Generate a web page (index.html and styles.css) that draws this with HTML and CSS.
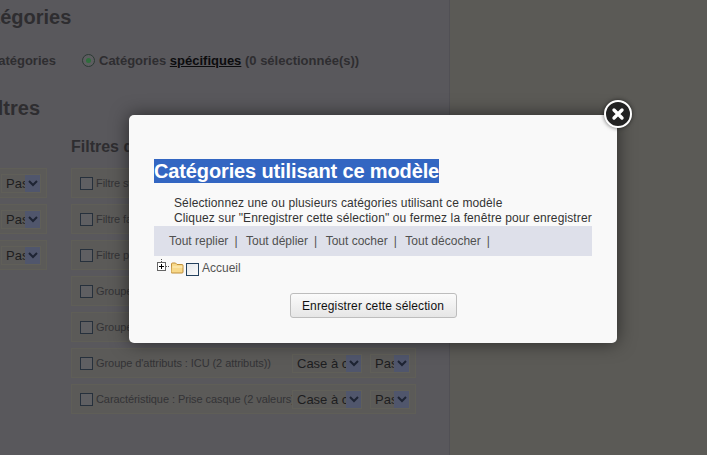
FILE: index.html
```html
<!DOCTYPE html>
<html lang="fr">
<head>
<meta charset="utf-8">
<title>Catégories</title>
<link rel="stylesheet" href="styles.css">
</head>
<body>
<div class="page">
  <main class="main">
    <h2 class="h-cat">Catégories</h2>
    <div class="radios">
      <span class="radio-all">Toutes les catégories</span>
      <svg class="radio-dot" viewBox="0 0 13 13" width="13" height="13"><circle cx="6.500" cy="6.500" r="6" fill="#5d5d60" stroke="#2c3a34"/><circle cx="6.500" cy="6.500" r="2.500" fill="#2f6e3c"/></svg>
      <span>Catégories <u class="link">spécifiques</u> (0 sélectionnée(s))</span>
    </div>
    <h2 class="h-fil">Filtres</h2>
    <div class="columns">
      <div class="col-left">
        <div class="lbox"><div class="sel sel-s"><span class="sel-t">Pas</span><span class="sel-a"><svg viewBox="0 0 10 8" width="10" height="8"><path d="M1 2l4 4 4-4" fill="none" stroke="#1e2433" stroke-width="2"/></svg></span></div></div>
        <div class="lbox"><div class="sel sel-s"><span class="sel-t">Pas</span><span class="sel-a"><svg viewBox="0 0 10 8" width="10" height="8"><path d="M1 2l4 4 4-4" fill="none" stroke="#1e2433" stroke-width="2"/></svg></span></div></div>
        <div class="lbox"><div class="sel sel-s"><span class="sel-t">Pas</span><span class="sel-a"><svg viewBox="0 0 10 8" width="10" height="8"><path d="M1 2l4 4 4-4" fill="none" stroke="#1e2433" stroke-width="2"/></svg></span></div></div>
      </div>
      <div class="col-right">
        <h3 class="h-sub">Filtres disponibles</h3>
        <div class="row"><span class="cb"></span><span class="lbl">Filtre stock</span></div>
        <div class="row"><span class="cb"></span><span class="lbl">Filtre fabricant</span></div>
        <div class="row"><span class="cb"></span><span class="lbl">Filtre prix</span></div>
        <div class="row"><span class="cb"></span><span class="lbl">Groupe d'attributs</span></div>
        <div class="row"><span class="cb"></span><span class="lbl">Groupe d'attributs</span></div>
        <div class="row"><span class="cb"></span><span class="lbl">Groupe d'attributs : ICU (2 attributs))</span><div class="sel sel-l"><span class="sel-t">Case à cocher</span><span class="sel-a"><svg viewBox="0 0 10 8" width="10" height="8"><path d="M1 2l4 4 4-4" fill="none" stroke="#1e2433" stroke-width="2"/></svg></span></div><div class="sel sel-s"><span class="sel-t">Pas</span><span class="sel-a"><svg viewBox="0 0 10 8" width="10" height="8"><path d="M1 2l4 4 4-4" fill="none" stroke="#1e2433" stroke-width="2"/></svg></span></div></div>
        <div class="row"><span class="cb"></span><span class="lbl">Caractéristique : Prise casque (2 valeurs)</span><div class="sel sel-l"><span class="sel-t">Case à cocher</span><span class="sel-a"><svg viewBox="0 0 10 8" width="10" height="8"><path d="M1 2l4 4 4-4" fill="none" stroke="#1e2433" stroke-width="2"/></svg></span></div><div class="sel sel-s"><span class="sel-t">Pas</span><span class="sel-a"><svg viewBox="0 0 10 8" width="10" height="8"><path d="M1 2l4 4 4-4" fill="none" stroke="#1e2433" stroke-width="2"/></svg></span></div></div>
      </div>
    </div>
  </main>
  <aside class="side"></aside>
</div>

<section class="modal">
  <button class="close" aria-label="Fermer"><svg viewBox="0 0 14 14" width="14" height="14"><path d="M3 3l8 8M11 3l-8 8" stroke="#fff" stroke-width="3.4" stroke-linecap="round"/></svg></button>
  <h1 class="m-title"><span>Catégories utilisant ce modèle</span></h1>
  <p class="m-desc">Sélectionnez une ou plusieurs catégories utilisant ce modèle<br>Cliquez sur "Enregistrer cette sélection" ou fermez la fenêtre pour enregistrer</p>
  <div class="tools">
    <a>Tout replier</a><i>|</i>
    <a>Tout déplier</a><i>|</i>
    <a>Tout cocher</a><i>|</i>
    <a>Tout décocher</a><i>|</i>
  </div>
  <div class="tree">
    <svg class="plus" viewBox="0 0 16 16" width="16" height="16"><path d="M5.500 0v3M10 7.500h3" stroke="#555" stroke-dasharray="1 1" fill="none"/><rect x="1.500" y="3.500" width="8" height="8" fill="#fff" stroke="#666"/><path d="M3 7.500h5M5.500 5v5" stroke="#000"/></svg>
    <svg class="folder" viewBox="0 0 13 12" width="13" height="12"><path d="M.5 3V2q0-1 1-1h3l1.500 1.500h5q1 0 1 1V10q0 1-1 1h-10q-1 0-1-1z" fill="#f8d98a" stroke="#c08f3a"/><path d="M1.500 5h10" stroke="#fdf0c4"/></svg>
    <span class="cb cb-m"></span>
    <span class="t-lbl">Accueil</span>
  </div>
  <div class="actions"><button class="save">Enregistrer cette sélection</button></div>
</section>
</body>
</html>
```
FILE: styles.css
```css
* { box-sizing: border-box; }
html, body { margin: 0; height: 100%; }
body { overflow: hidden; font-family: "Liberation Sans", Arial, sans-serif; background: #5b5a56; }

.page { display: flex; width: 707px; height: 455px; }
.main { width: 450px; flex: none; background: #59585c; border-right: 1px solid #515055; overflow: hidden; padding-top: 5px; }
.side { flex: 1; background: #5b5a56; }

.h-cat, .h-fil { margin: 0; font-size: 20px; line-height: 24px; font-weight: bold; color: #2e2d30; }
.h-cat { margin-left: -32px; }
.h-fil { margin: 28px 0 0 -20px; }

.radios { display: flex; align-items: center; margin: 23px 0 0 -76px; height: 16px; font-size: 13px; font-weight: bold; color: #2e2d30; white-space: nowrap; }
.radio-all { width: 152px; flex: none; }
.radio-dot { flex: none; margin: 0 4px 0 6px; }
.link { color: #0c0c0e; }

.columns { display: flex; gap: 24px; margin-left: -20px; }
.col-left { width: 67px; flex: none; padding-top: 48px; display: flex; flex-direction: column; gap: 6px; }
.col-right { width: 345px; flex: none; }
.lbox { height: 30px; border: 1px solid #5f5e57; border-left: 0; display: flex; align-items: center; justify-content: flex-end; padding-right: 5px; background: #5b5a58; }
.h-sub { margin: 18px 0 12px; font-size: 16px; line-height: 18px; color: #2e2d30; white-space: nowrap; }

.row { display: flex; align-items: center; height: 30px; margin-bottom: 6px; padding-left: 8px; border: 1px solid #5f5e57; background: #5b5a58; overflow: hidden; }
.cb { flex: none; display: block; width: 13px; height: 13px; border: 1px solid #26303c; background: #5f5f62; }
.lbl { flex: none; width: 196px; margin-left: 3px; font-size: 11px; letter-spacing: -.07px; color: #333336; white-space: nowrap; overflow: hidden; }
.row .sel-l { margin-right: 8px; }

.sel { flex: none; display: flex; height: 19px; border: 1px solid #605f58; background: #5b5a58; align-items: stretch; }
.sel-s { width: 40px; }
.sel-l { width: 70px; }
.sel-t { flex: 1; min-width: 0; padding-left: 4px; font-size: 13px; line-height: 17px; color: #1d1d1f; white-space: nowrap; overflow: hidden; }
.sel-a { flex: none; width: 15px; background: #50566c; display: flex; align-items: center; justify-content: center; }

.modal { position: absolute; left: 129px; top: 115px; width: 488px; height: 228px; padding: 44px 25px 0; background: #f9f9f9; border-radius: 5px; box-shadow: 0 0 18px rgba(0,0,0,.55); }
.close { position: absolute; right: -15px; top: -15px; width: 28px; height: 28px; padding: 0; border: 2px solid #fff; border-radius: 50%; background: #222; display: flex; align-items: center; justify-content: center; box-shadow: 0 0 4px rgba(0,0,0,.6); }
.m-title { margin: 0; font-size: 20px; line-height: 24px; letter-spacing: -.13px; color: #fff; font-weight: bold; }
.m-title span { background: #3366c2; display: inline-block; }
.m-desc { margin: 13px 0 0 20px; font-size: 12px; line-height: 15px; letter-spacing: .115px; color: #333; white-space: nowrap; }
.tools { display: flex; align-items: center; height: 30px; padding-left: 15px; background: #dee0ea; font-size: 12px; color: #505050; }
.tools i { font-style: normal; margin: 0 8.500px 0 6px; }
.tree { display: flex; align-items: flex-start; height: 20px; margin-top: 3px; padding-left: 2px; }
.plus, .folder { flex: none; }
.folder { margin: 3px 0 0 -1px; }
.cb-m { margin: 4px 0 0 2px; background: linear-gradient(135deg, #e4e8ec, #fbfbfb); border-color: #23415e; }
.t-lbl { margin: 2px 0 0 3px; font-size: 12px; line-height: 15px; color: #555; }
.actions { display: flex; justify-content: center; margin-top: 14px; }
.save { width: 167px; height: 25px; padding: 0; border: 1px solid #bdbdbd; border-radius: 3px; background: linear-gradient(#fbfbfb, #e6e6e6); font: 12px "Liberation Sans", Arial, sans-serif; letter-spacing: .12px; color: #111; }
```
